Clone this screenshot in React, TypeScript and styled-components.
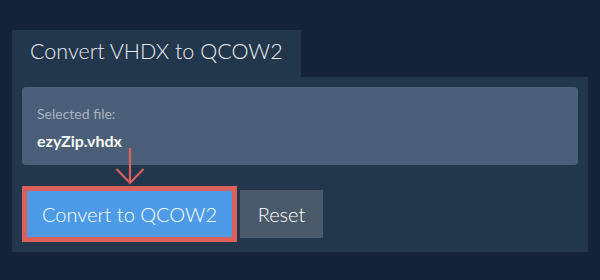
import React from "react"
import styled, { createGlobalStyle } from "styled-components"

const GlobalStyle = createGlobalStyle`
  html, body {
    margin: 0;
    padding: 0;
    background: #13233a;
    font-family: Lato, "Open Sans", sans-serif;
  }
`

const Page = styled.div`
  width: 600px;
  height: 280px;
  padding: 30px 12px 0 12px;
  box-sizing: border-box;
`

const Tab = styled.div`
  display: inline-flex;
  align-items: center;
  width: 289px;
  height: 47px;
  box-sizing: border-box;
  padding: 0 0 5px 18px;
  background: #22364c;
  color: #e8ecf0;
  font-size: 21.5px;
  font-weight: 300;
  white-space: nowrap;
  vertical-align: top;
`

const Panel = styled.div`
  position: relative;
  width: 576px;
  box-sizing: border-box;
  padding: 10px 10px 10px 10px;
  background: #22364c;
`

const FileBox = styled.div`
  height: 78px;
  box-sizing: border-box;
  padding: 18px 15px 0 15px;
  background: #4b6078;
  border-radius: 4px;
`

const Label = styled.div`
  color: #a8b3c0;
  font-size: 14px;
  line-height: 18px;
`

const FileName = styled.div`
  margin-top: 8px;
  color: #ffffff;
  font-size: 16px;
  font-weight: 700;
  line-height: 20px;
`

const Actions = styled.div`
  display: flex;
  align-items: center;
  gap: 3px;
  margin-top: 21px;
`

const Button = styled.button<{ $variant: "primary" | "plain" }>`
  font-family: Lato, "Open Sans", sans-serif;
  font-size: 20px;
  font-weight: 300;
  color: #ffffff;
  cursor: pointer;
  box-sizing: border-box;
  display: inline-flex;
  align-items: center;
  justify-content: center;
  padding: 0;
  white-space: nowrap;
  ${({ $variant }) =>
    $variant === "primary"
      ? `
    width: 215px;
    height: 56px;
    background: #4d9be6;
    border: 5px solid #db5f5a;
  `
      : `
    width: 83px;
    height: 48px;
    background: #4b5a6b;
    border: none;
  `}
`

const Arrow = styled.svg`
  position: absolute;
  left: 103px;
  top: 71px;
`

export default function App() {
  return (
    <Page>
      <GlobalStyle />
      <Tab>Convert VHDX to QCOW2</Tab>
      <Panel>
        <FileBox>
          <Label>Selected file:</Label>
          <FileName>ezyZip.vhdx</FileName>
        </FileBox>
        <Actions>
          <Button $variant="primary">Convert to QCOW2</Button>
          <Button $variant="plain">Reset</Button>
        </Actions>
        <Arrow width="30" height="38" viewBox="0 0 30 38">
          <path
            d="M15 0 V35 M1.5 21 L15 35 L28.5 21"
            fill="none"
            stroke="#db5f5a"
            strokeWidth="2.2"
          />
        </Arrow>
      </Panel>
    </Page>
  )
}
